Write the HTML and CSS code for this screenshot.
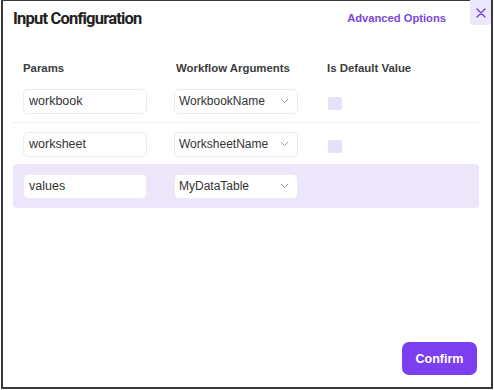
FILE: index.html
```html
<!DOCTYPE html>
<html lang="en">
<head>
  <meta charset="UTF-8" />
  <title>Input Configuration</title>
  <link rel="stylesheet" href="styles.css">
</head>
<body>
  <div class="dialog">
    <div class="dialog-head">
      <h1>Input Configuration</h1>
      <a class="advanced">Advanced Options</a>
      <button class="close" aria-label="Close">
        <svg width="10" height="10" viewBox="0 0 10 10"><path d="M1 1L9 9M9 1L1 9" stroke="#7b47d9" stroke-width="1.5" stroke-linecap="round"/></svg>
      </button>
    </div>

    <div class="table">
      <div class="cols heads">
        <span>Params</span>
        <span>Workflow Arguments</span>
        <span>Is Default Value</span>
      </div>

      <div class="cols row">
        <div class="field">workbook</div>
        <div class="field select">WorkbookName <svg class="chev" width="9" height="6" viewBox="0 0 9 6"><path d="M1 1l3.5 3.5L8 1" fill="none" stroke="#a0a0a8" stroke-width="1"/></svg></div>
        <div><span class="check"></span></div>
      </div>
      <div class="cols row">
        <div class="field">worksheet</div>
        <div class="field select">WorksheetName <svg class="chev" width="9" height="6" viewBox="0 0 9 6"><path d="M1 1l3.5 3.5L8 1" fill="none" stroke="#a0a0a8" stroke-width="1"/></svg></div>
        <div><span class="check"></span></div>
      </div>
      <div class="cols row active">
        <div class="field">values</div>
        <div class="field select">MyDataTable <svg class="chev" width="9" height="6" viewBox="0 0 9 6"><path d="M1 1l3.5 3.5L8 1" fill="none" stroke="#a0a0a8" stroke-width="1"/></svg></div>
        <div></div>
      </div>
    </div>

    <div class="dialog-foot">
      <button class="confirm">Confirm</button>
    </div>
  </div>
</body>
</html>
```

FILE: styles.css
```css
body {
  margin: 0;
  font-family: 'Liberation Sans', Arial, sans-serif;
  color: #333;
  background: #fff;
}
.dialog {
  box-sizing: border-box;
  width: 492px;
  height: 389px;
  margin-left: 1px;
  border: 2px solid #3a3a3a;
  border-top-width: 1px;
  display: flex;
  flex-direction: column;
}
.dialog-head {
  display: flex;
  align-items: flex-start;
  height: 55px;
}
h1 {
  margin: 8px 0 0 10px;
  font-family: 'Roboto', sans-serif;
  font-size: 16.5px;
  font-weight: bold;
  letter-spacing: -0.8px;
  color: #222;
  flex: 1;
}
.advanced {
  margin: 11px 24px 0 0;
  font-size: 11.2px;
  font-weight: bold;
  color: #7b47d9;
}
.close {
  width: 21px;
  height: 25px;
  border: none;
  padding: 0;
  margin-top: -1px;
  background: #ede7fb;
  border-radius: 0 0 3px 3px;
  display: flex;
  align-items: center;
  justify-content: center;
}
.table {
  margin: 0 12px 0 10px;
}
.cols {
  display: grid;
  grid-template-columns: 151px 156px 1fr;
  padding-left: 10px;
  align-items: center;
}
.heads {
  height: 24px;
  font-size: 11.4px;
  font-weight: bold;
  color: #3c3c3c;
}
.heads span:nth-child(2) { margin-left: 2px; }
.heads span:nth-child(3) { margin-left: -3px; }
.row {
  height: 42px;
  border-bottom: 1px solid #f0f0f2;
}
.row.active {
  background: #ede6fb;
  border-radius: 4px;
  border-bottom: none;
  height: 44px;
  margin-top: -2px;
}
.field {
  box-sizing: border-box;
  width: 124px;
  height: 25px;
  border: 1px solid #ececec;
  border-radius: 5px;
  background: #fff;
  font-size: 12.5px;
  color: #333;
  padding-left: 5px;
  display: flex;
  align-items: center;
}
.select {
  justify-content: space-between;
  padding-left: 4px;
  padding-right: 8px;
  font-size: 12px;
}
.chev {
  flex: none;
}
.check {
  display: block;
  width: 14px;
  height: 13px;
  background: #e6e0f9;
  border-radius: 2px;
  margin-left: -2px;
  margin-top: 5px;
}
.dialog-foot {
  margin-top: auto;
  display: flex;
  justify-content: flex-end;
  padding: 0 14px 12px 0;
}
.confirm {
  width: 75px;
  height: 33px;
  border: none;
  border-radius: 7px;
  background: #7b3ff0;
  color: #fff;
  font-family: 'Liberation Sans', Arial, sans-serif;
  font-size: 12.5px;
  font-weight: bold;
}
```
